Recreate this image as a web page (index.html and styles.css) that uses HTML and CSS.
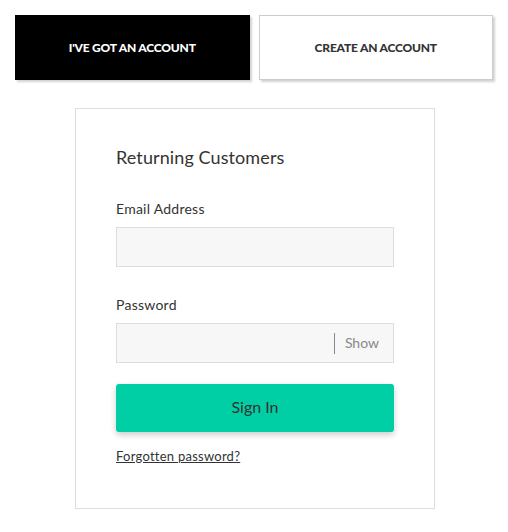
FILE: index.html
```html
<!DOCTYPE html>
<html lang="en">
<head>
  <meta charset="UTF-8" />
  <meta name="viewport" content="width=device-width, initial-scale=1.0" />
  <title>Sign In</title>
  <link rel="stylesheet" href="styles.css">
</head>
<body>

  <div class="tabs">
    <a href="#" class="tab active">I'VE GOT AN ACCOUNT</a>
    <a href="#" class="tab">CREATE AN ACCOUNT</a>
  </div>

  <div class="login-card">
    <h2>Returning Customers</h2>

    <label for="email">Email Address</label>
    <input type="email" id="email" class="field" />

    <label for="password" class="pw-label">Password</label>
    <div class="field pw-field">
      <input type="password" id="password" />
      <span class="show-btn">Show</span>
    </div>

    <button class="sign-in">Sign In</button>

    <a href="#" class="forgot">Forgotten password?</a>
  </div>

</body>
</html>
```

FILE: styles.css
```css
body {
  margin: 0;
  padding: 15px;
  background: #fff;
  font-family: Lato, 'Open Sans', sans-serif;
  color: #333;
}

.tabs {
  display: flex;
  gap: 9px;
}

.tab {
  box-sizing: border-box;
  width: 235px;
  height: 65px;
  display: flex;
  align-items: center;
  justify-content: center;
  font-size: 12px;
  font-weight: 900;
  letter-spacing: -0.2px;
  text-decoration: none;
  color: #333;
  background: #fff;
  border: 1px solid #ccc;
  box-shadow: 2px 2px 2px rgba(0, 0, 0, 0.18);
}

.tab.active {
  background: #000;
  color: #fff;
  border-color: #000;
}

.login-card {
  box-sizing: border-box;
  width: 360px;
  height: 401px;
  margin: 28px 0 0 60px;
  padding: 37px 40px 0;
  border: 1px solid #ddd;
  display: flex;
  flex-direction: column;
}

.login-card h2 {
  margin: 0 0 31px;
  font-size: 18px;
  font-weight: 400;
  letter-spacing: 0.1px;
  line-height: 22px;
}

.login-card label {
  font-size: 14px;
  letter-spacing: 0.25px;
  line-height: 20px;
  margin-bottom: 8px;
}

.field {
  box-sizing: border-box;
  width: 100%;
  height: 40px;
  margin: 0;
  background: #f7f7f7;
  border: 1px solid #ddd;
}

.pw-label {
  margin-top: 28px;
}

.pw-field {
  display: flex;
  align-items: center;
}

.pw-field input {
  flex: 1;
  min-width: 0;
  height: 100%;
  border: none;
  background: transparent;
}

.show-btn {
  border-left: 1px solid #888;
  padding: 0 14px 2px 10px;
  font-size: 14px;
  line-height: 19px;
  color: #888;
}

.sign-in {
  margin-top: 21px;
  height: 48px;
  padding: 0 0 3px;
  border: none;
  border-radius: 3px;
  background: #00cfa5;
  color: #333;
  font-family: inherit;
  font-size: 16px;
  box-shadow: 0 3px 6px rgba(0, 0, 0, 0.2);
  cursor: pointer;
}

.forgot {
  margin-top: 15px;
  align-self: flex-start;
  font-size: 13px;
  letter-spacing: 0.25px;
  line-height: 18px;
  color: #333;
}
```
